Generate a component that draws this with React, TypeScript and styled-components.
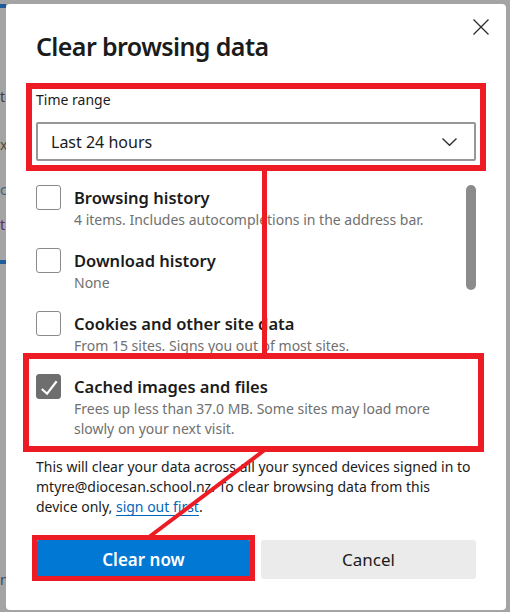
import React from 'react'
import styled, { createGlobalStyle } from 'styled-components'

const GlobalStyle = createGlobalStyle`
  html, body {
    margin: 0;
    padding: 0;
  }
  body {
    width: 510px;
    height: 612px;
    overflow: hidden;
    background: #a4a4a4;
    font-family: "Noto Sans", "Open Sans", sans-serif;
  }
`

type Item = { title: string; desc: string[]; checked?: boolean }

const items: Item[] = [
  { title: 'Browsing history', desc: ['4 items. Includes autocompletions in the address bar.'] },
  { title: 'Download history', desc: ['None'] },
  { title: 'Cookies and other site data', desc: ['From 15 sites. Signs you out of most sites.'] },
  {
    title: 'Cached images and files',
    desc: ['Frees up less than 37.0 MB. Some sites may load more', 'slowly on your next visit.'],
    checked: true,
  },
  { title: 'Passwords', desc: ['None'] },
]

function App() {
  return (
    <>
      <GlobalStyle />
      <Page>
        <Backdrop>
          <BackBar $top={4} />
          <BackText $top={79} $color="#3d3d3d">te</BackText>
          <BackText $top={28} $color="#5b4a32">x</BackText>
          <BackText $top={25} $color="#3f5f80">c</BackText>
          <BackText $top={15} $color="#5a2c66">t</BackText>
          <BackBar $top={25} />
          <BackText $top={306} $color="#3a4a6a">ni</BackText>
        </Backdrop>

        <Dialog>
          <CloseButton aria-label="Close">
            <svg width="16" height="16" viewBox="0 0 16 16">
              <path d="M0.5 0.5 L15.5 15.5 M15.5 0.5 L0.5 15.5" stroke="#2b2b2b" strokeWidth="1.3" fill="none" />
            </svg>
          </CloseButton>

          <Title>Clear browsing data</Title>

          <Label>Time range</Label>
          <Select>
            <span>Last 24 hours</span>
            <svg width="15" height="8" viewBox="0 0 15 8">
              <polyline points="0.5,0.5 7.5,7.3 14.5,0.5" stroke="#333" strokeWidth="1.4" fill="none" />
            </svg>
          </Select>

          <List>
            <Options>
              {items.map((it) => (
                <Option key={it.title}>
                  <Checkbox $checked={it.checked}>
                    {it.checked && (
                      <svg width="24" height="24" viewBox="0 0 24 24">
                        <polyline points="5,14 10.5,19 20.5,6" stroke="#fff" strokeWidth="2.2" fill="none" />
                      </svg>
                    )}
                  </Checkbox>
                  <OptionText>
                    <OptionTitle>{it.title}</OptionTitle>
                    {it.desc.map((d) => (
                      <OptionDesc key={d}>{d}</OptionDesc>
                    ))}
                  </OptionText>
                </Option>
              ))}
            </Options>
            <Track>
              <Thumb />
            </Track>
          </List>

          <Notice>
            This will clear your data across all your synced devices signed in to
            <br />
            mtyre@diocesan.school.nz. To clear browsing data from this
            <br />
            device only, <a href="#">sign out first</a>.
          </Notice>

          <Buttons>
            <Button $primary>Clear now</Button>
            <Button>Cancel</Button>
          </Buttons>
        </Dialog>

        {/* red markup drawn over the screenshot */}
        <Markup width="510" height="612" viewBox="0 0 510 612">
          <rect x="29" y="86" width="454" height="82" />
          <line x1="264.5" y1="170" x2="264.5" y2="354" strokeWidth="5" />
          <rect x="26" y="356" width="455" height="93" />
          <line x1="266" y1="449" x2="149" y2="537" strokeWidth="4" />
          <rect x="34.5" y="537.5" width="218" height="41" strokeWidth="5" />
        </Markup>
      </Page>
    </>
  )
}

const Page = styled.div`
  position: relative;
  display: flex;
  align-items: flex-start;
  width: 510px;
  height: 612px;
`

const Backdrop = styled.div`
  width: 6px;
  height: 612px;
  overflow: hidden;
  display: flex;
  flex-direction: column;
`

const BackBar = styled.div<{ $top: number }>`
  flex: none;
  height: 4px;
  margin-top: ${(p) => p.$top}px;
  background: #1e5c9c;
`

const BackText = styled.div<{ $top: number; $color: string }>`
  flex: none;
  margin-top: ${(p) => p.$top}px;
  font-size: 14px;
  line-height: 20px;
  white-space: nowrap;
  color: ${(p) => p.$color};
`

const Dialog = styled.div`
  position: relative;
  box-sizing: border-box;
  width: 500px;
  height: 606px;
  margin-top: 4px;
  padding: 24px 30px 0 30px;
  display: flex;
  flex-direction: column;
  background: #fff;
  border-radius: 4px;
  color: #1b1b1b;
`

const CloseButton = styled.button`
  position: absolute;
  top: 15px;
  right: 17px;
  width: 16px;
  height: 16px;
  padding: 0;
  border: none;
  background: none;
  display: flex;
`

const Title = styled.h1`
  margin: 0;
  font-size: 25px;
  line-height: 36px;
  font-weight: 600;
  letter-spacing: -0.6px;
`

const Label = styled.div`
  margin-top: 26px;
  font-size: 14px;
  line-height: 20px;
`

const Select = styled.div`
  box-sizing: border-box;
  height: 39px;
  margin-top: 12px;
  padding: 0 17px 0 13px;
  display: flex;
  align-items: center;
  justify-content: space-between;
  border: 2px solid #979797;
  border-radius: 2px;
  font-size: 16px;
`

const List = styled.div`
  display: flex;
  height: 262px;
  margin-top: 24px;
  overflow: hidden;
`

const Options = styled.div`
  flex: 1;
  display: flex;
  flex-direction: column;
  gap: 18px;
`

const Option = styled.div`
  display: flex;
  align-items: flex-start;
  gap: 13px;
`

const Checkbox = styled.div<{ $checked?: boolean }>`
  flex: none;
  box-sizing: border-box;
  width: 25px;
  height: 25px;
  border-radius: 3px;
  border: 1px solid ${(p) => (p.$checked ? '#6e6e6e' : '#8a8a8a')};
  background: ${(p) => (p.$checked ? '#6e6e6e' : '#fff')};
  display: flex;
  align-items: center;
  justify-content: center;
`

const OptionText = styled.div`
  margin-top: 1px;
  display: flex;
  flex-direction: column;
`

const OptionTitle = styled.div`
  font-size: 16.5px;
  line-height: 24px;
  font-weight: 600;
`

const OptionDesc = styled.div`
  font-size: 14px;
  line-height: 20px;
  color: #707070;
`

const Track = styled.div`
  flex: none;
  width: 10px;
`

const Thumb = styled.div`
  height: 105px;
  border-radius: 5px;
  background: #8b8b8b;
`

const Notice = styled.p`
  margin: 10px 0 0 0;
  font-size: 14px;
  line-height: 20px;
  white-space: nowrap;

  a {
    color: #0067b8;
    text-decoration: underline;
    text-underline-offset: 3px;
  }
`

const Buttons = styled.div`
  display: flex;
  gap: 10px;
  margin-top: 23px;
`

const Button = styled.button<{ $primary?: boolean }>`
  flex: 1;
  height: 39px;
  border: none;
  border-radius: 3px;
  font-family: inherit;
  font-size: 17px;
  font-weight: ${(p) => (p.$primary ? 600 : 400)};
  color: ${(p) => (p.$primary ? '#fff' : '#1b1b1b')};
  background: ${(p) => (p.$primary ? '#0078d4' : '#ebebeb')};
`

const Markup = styled.svg`
  position: absolute;
  left: 0;
  top: 0;
  pointer-events: none;
  fill: none;
  stroke: #ed1c24;
  stroke-width: 6;
`

export default App
